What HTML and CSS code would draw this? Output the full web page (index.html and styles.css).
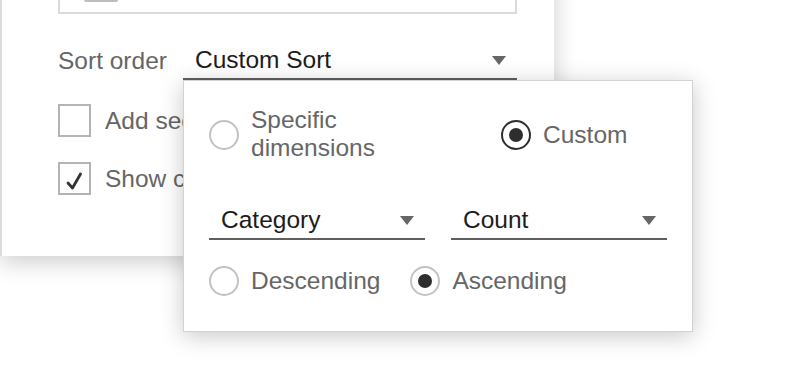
FILE: index.html
```html
<!DOCTYPE html>
<html lang="en">
<head>
    <meta charset="UTF-8">
    <title>Sort order</title>
    <link rel="stylesheet" href="styles.css">
</head>
<body>

<div class="page">
    <div class="panel">
        <div class="field-box">
            <div class="field-chip"></div>
        </div>
        <div class="sort-row">
            <span class="sort-label">Sort order</span>
            <div class="select select-wide">
                <span class="select-value">Custom Sort</span>
                <span class="caret"></span>
            </div>
        </div>
        <label class="check-row">
            <span class="checkbox"></span>
            <span class="check-text">Add secondary sort</span>
        </label>
        <label class="check-row">
            <span class="checkbox checked">
                <svg width="33" height="33" viewBox="0 0 33 33">
                    <path d="M10 21 L14.5 26 L22.5 12" fill="none" stroke="#333" stroke-width="2.8"
                          stroke-linecap="round" stroke-linejoin="round"/>
                </svg>
            </span>
            <span class="check-text">Show custom order</span>
        </label>
    </div>

    <div class="popup">
        <div class="popup-row top-row">
            <div class="cell">
                <span class="radio"></span>
                <span class="radio-text two-line">Specific<br>dimensions</span>
            </div>
            <div class="cell cell-custom">
                <span class="radio radio-dark on"></span>
                <span class="radio-text">Custom</span>
            </div>
        </div>
        <div class="popup-row select-row">
            <div class="select">
                <span class="select-value">Category</span>
                <span class="caret"></span>
            </div>
            <div class="select">
                <span class="select-value">Count</span>
                <span class="caret"></span>
            </div>
        </div>
        <div class="direction-row">
            <span class="radio"></span>
            <span class="radio-text">Descending</span>
            <span class="radio on spaced"></span>
            <span class="radio-text">Ascending</span>
        </div>
    </div>
</div>

</body>
</html>
```

FILE: styles.css
```css
body {
    margin: 0;
    background: #fff;
    font-family: "Liberation Sans", Arial, sans-serif;
    font-size: 24.5px;
    color: #666;
    overflow: hidden;
}

.page {
    display: flow-root;
    position: relative;
    height: 378px;
}

.panel {
    display: flow-root;
    width: 459px;
    margin-top: -40px;
    padding: 0 37px 61px 56px;
    background: #fff;
    border-left: 2px solid #dcdcdc;
    box-shadow: 0 6px 22px rgba(0, 0, 0, 0.2);
}

.field-box {
    height: 54px;
    padding: 16px 0 0 24px;
    border: 2px solid #dadada;
    border-top: 0;
    box-sizing: border-box;
}

.field-chip {
    width: 34px;
    height: 26px;
    background: #bdbdbd;
    border-radius: 2px;
}

.sort-row {
    display: flex;
    align-items: center;
    margin-top: 28px;
}

.sort-label {
    width: 125px;
    flex: none;
}

.select {
    display: flex;
    align-items: center;
    justify-content: space-between;
    height: 36px;
    padding: 0 11px 0 12px;
    border-bottom: 2px solid #5f5f5f;
    color: #1c1c1c;
}

.select-wide {
    flex: 1;
}

.caret {
    width: 0;
    height: 0;
    border-left: 7px solid transparent;
    border-right: 7px solid transparent;
    border-top: 9px solid #666;
}

.check-row {
    display: flex;
    align-items: center;
    gap: 14px;
    margin-top: 24px;
    white-space: nowrap;
}

.check-row + .check-row {
    margin-top: 25px;
}

.checkbox {
    width: 33px;
    height: 33px;
    box-sizing: border-box;
    border: 2px solid #b4b4b4;
    flex: none;
}

.checkbox svg {
    display: block;
    margin: -2px;
}

.popup {
    position: absolute;
    left: 183px;
    top: 80px;
    width: 458px;
    padding: 26px 25px 35px 25px;
    background: #fff;
    border: 1px solid #d2d2d2;
    box-shadow: 0 4px 22px rgba(0, 0, 0, 0.22);
}

.popup-row {
    display: grid;
    grid-template-columns: 216px 216px;
    column-gap: 26px;
}

.top-row {
    height: 56px;
}

.cell {
    display: flex;
    align-items: center;
    gap: 12px;
}

.cell-custom {
    padding-left: 50px;
}

.radio {
    width: 30px;
    height: 30px;
    box-sizing: border-box;
    border: 2px solid #c2c2c2;
    border-radius: 50%;
    flex: none;
    display: flex;
    align-items: center;
    justify-content: center;
}

.radio-dark {
    border-color: #2e2e2e;
}

.radio.on::after {
    content: "";
    width: 14px;
    height: 14px;
    border-radius: 50%;
    background: #2e2e2e;
}

.radio-text {
    line-height: 28px;
}

.two-line {
    margin-top: -2px;
}

.select-row {
    margin-top: 39px;
}

.direction-row {
    display: flex;
    align-items: center;
    gap: 12px;
    margin-top: 26px;
    height: 30px;
}

.spaced {
    margin-left: 18px;
}
```
